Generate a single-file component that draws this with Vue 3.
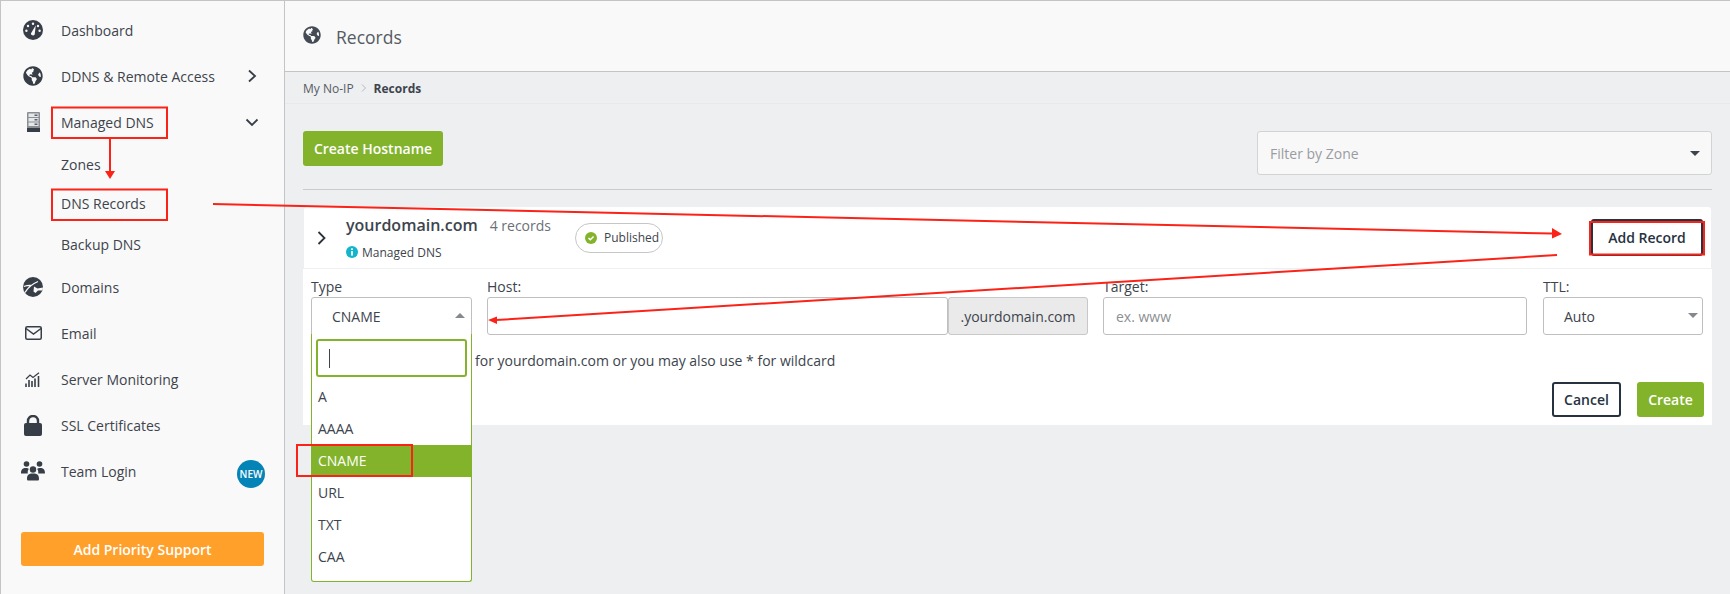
<script setup>
const globe = 'M248 8C111.03 8 0 119.03 0 256s111.03 248 248 248 248-111.03 248-248S384.97 8 248 8zm82.29 357.6c-3.9 3.88-7.99 7.95-11.31 11.28-2.99 3-5.1 6.7-6.17 10.71-1.51 5.66-2.73 11.38-4.77 16.87l-17.39 46.85c-13.76 3-28 4.69-42.65 4.69v-27.38c1.69-12.62-7.64-36.26-22.63-51.25-6-6-9.37-14.14-9.37-22.63v-32.01c0-11.64-6.27-22.34-16.46-27.97-14.37-7.95-34.81-19.06-48.81-26.11-11.48-5.78-22.1-13.14-31.65-21.75l-.8-.72a114.792 114.792 0 0 1-18.06-20.74c-9.38-13.77-24.66-36.42-34.59-51.14 20.47-45.5 57.36-82.04 103.2-101.89l24.01 12.01C203.48 89.74 216 82.01 216 70.11v-11.3c7.99-1.29 16.12-2.11 24.45-2.41l28.3 28.3c6.25 6.25 6.25 16.38 0 22.63L264 112l-10.34 10.34c-3.12 3.12-3.12 8.19 0 11.31l4.69 4.69c3.12 3.12 3.12 8.19 0 11.31l-8 8a8.008 8.008 0 0 1-5.66 2.34h-8.99c-2.08 0-4.08.81-5.58 2.27l-9.92 9.65a8.008 8.008 0 0 0-1.58 9.31l15.59 31.19c2.66 5.32-1.21 11.58-7.15 11.58h-5.64c-1.93 0-3.79-.7-5.24-1.96l-9.28-8.06a16.017 16.017 0 0 0-15.55-3.1l-31.17 10.39a11.95 11.95 0 0 0-8.17 11.34c0 4.53 2.56 8.66 6.61 10.69l11.08 5.54c9.41 4.71 19.79 7.16 30.31 7.16s22.59 27.29 32 32h66.75c8.49 0 16.62 3.37 22.63 9.37l13.69 13.69a30.503 30.503 0 0 1 8.93 21.57 46.536 46.536 0 0 1-13.72 32.98zM417 274.25c-5.79-1.45-10.84-5-14.15-9.97l-17.98-26.97a23.97 23.97 0 0 1 0-26.62l19.59-29.38c2.32-3.47 5.5-6.29 9.24-8.15l12.98-6.49C440.2 193.59 448 223.87 448 256c0 8.67-.74 17.16-1.82 25.54L417 274.25z'
const navTop = [
  { label: 'Dashboard', icon: 'dash' },
  { label: 'DDNS & Remote Access', icon: 'globe', chev: 'right' },
  { label: 'Managed DNS', icon: 'server', chev: 'down' }
]
const subs = ['Zones', 'DNS Records', 'Backup DNS']
const navBottom = [
  { label: 'Domains', icon: 'domains' },
  { label: 'Email', icon: 'mail' },
  { label: 'Server Monitoring', icon: 'chart' },
  { label: 'SSL Certificates', icon: 'lock' },
  { label: 'Team Login', icon: 'team', badge: true }
]
const options = ['A', 'AAAA', 'CNAME', 'URL', 'TXT', 'CAA']
</script>

<template>
  <div class="page">
    <aside class="side">
      <div v-for="n in navTop" :key="n.label" class="nav">
        <span class="ico">
          <svg v-if="n.icon === 'dash'" width="20" height="20" viewBox="0 0 20 20"><circle cx="10" cy="10" r="10" fill="#373e47"/><circle cx="10" cy="3.800" r="1.200" fill="#f9f9f9"/><circle cx="5" cy="6" r="1.200" fill="#f9f9f9"/><circle cx="3.400" cy="10.800" r="1.200" fill="#f9f9f9"/><circle cx="16.600" cy="10.800" r="1.200" fill="#f9f9f9"/><circle cx="15" cy="6" r="1.200" fill="#f9f9f9"/><path d="M7.900 13.400 12.800 5.200 11.700 14.600A2.100 2.100 0 0 1 7.900 13.400Z" fill="#f9f9f9"/></svg>
          <svg v-else-if="n.icon === 'globe'" width="20" height="20" viewBox="0 0 496 512"><path :d="globe" fill="#373e47"/></svg>
          <svg v-else width="13" height="20" viewBox="0 0 13 20"><rect width="13" height="20" rx="1" fill="#8b8f94"/><rect x="1.500" y="1.500" width="10" height="3.500" fill="#e6e7e8"/><rect x="1.500" y="6" width="10" height="3.500" fill="#e6e7e8"/><rect x="1.500" y="10.500" width="10" height="3.500" fill="#e6e7e8"/><rect x="7.500" y="2.500" width="3" height="1.500" fill="#5b6168"/><rect x="7.500" y="7" width="3" height="1.500" fill="#5b6168"/><rect x="7.500" y="11.500" width="3" height="1.500" fill="#5b6168"/><rect y="16" width="13" height="4" fill="#373e47"/></svg>
        </span>
        <span>{{ n.label }}</span>
        <svg v-if="n.chev === 'right'" class="chev" width="14" height="14" viewBox="0 0 14 14"><path d="M4 1.500 10 7 4 12.500" fill="none" stroke="#373e47" stroke-width="1.800"/></svg>
        <svg v-if="n.chev === 'down'" class="chev" width="14" height="14" viewBox="0 0 14 14"><path d="M1.500 4.500 7 10 12.500 4.500" fill="none" stroke="#373e47" stroke-width="1.800"/></svg>
      </div>
      <div class="subs">
        <div v-for="s in subs" :key="s" class="sub" :class="{ active: s === 'DNS Records' }"><span>{{ s }}</span></div>
      </div>
      <div v-for="n in navBottom" :key="n.label" class="nav">
        <span class="ico">
          <svg v-if="n.icon === 'domains'" width="20" height="20" viewBox="0 0 20 20"><circle cx="10" cy="10" r="10" fill="#373e47"/><path d="M2 15.500C5 10.500 9 7 15 4.500M.8 9.500C3.500 8.500 6 8 8.500 8.500" fill="none" stroke="#f9f9f9" stroke-width="1.300"/><path d="M11 9.500 14.500 11.500 20 10.500 19.500 13.500 15 13.500 12.500 16 10.500 14.500Z" fill="#f9f9f9"/></svg>
          <svg v-else-if="n.icon === 'mail'" width="17" height="14" viewBox="0 0 17 14"><rect x=".75" y=".75" width="15.500" height="12.500" rx="1.500" fill="none" stroke="#373e47" stroke-width="1.500"/><path d="M1 2.500 8.500 8 16 2.500" fill="none" stroke="#373e47" stroke-width="1.500"/></svg>
          <svg v-else-if="n.icon === 'chart'" width="16" height="15" viewBox="0 0 16 15"><path d="M1 7 5 3 8 5.500 14 .8" fill="none" stroke="#373e47" stroke-width="1.200"/><path d="M1 11.500V15M4 8V15M7 9V15M10 6.500V15M13.500 4V15" stroke="#373e47" stroke-width="1.600"/></svg>
          <svg v-else-if="n.icon === 'lock'" width="18" height="21" viewBox="0 0 18 21"><path d="M4 9V6a5 5 0 0 1 10 0v3" fill="none" stroke="#373e47" stroke-width="2.400"/><rect y="8" width="18" height="13" rx="2" fill="#373e47"/></svg>
          <svg v-else width="24" height="20" viewBox="0 0 24 20"><circle cx="5.500" cy="3" r="2.800" fill="#373e47"/><circle cx="18.500" cy="3" r="2.800" fill="#373e47"/><circle cx="12" cy="8.500" r="3.200" fill="#373e47"/><path d="M0 12.500c0-4 1.500-5.500 5-5.500 1.200 0 2.200.3 2.800 1-1 1-1.300 2.800-1 4.500ZM24 12.500c0-4-1.500-5.500-5-5.500-1.200 0-2.200.3-2.800 1 1 1 1.300 2.800 1 4.500ZM6 18c0-4 1.500-5.500 6-5.500s6 1.500 6 5.500c0 1-.5 1.500-1.500 1.500h-9C6.500 19.500 6 19 6 18Z" fill="#373e47"/></svg>
        </span>
        <span>{{ n.label }}</span>
        <span v-if="n.badge" class="badge">NEW</span>
      </div>
      <button class="priority">Add Priority Support</button>
    </aside>

    <main class="main">
      <header class="head">
        <svg width="18" height="18" viewBox="0 0 496 512"><path :d="globe" fill="#454b54"/></svg>
        <h1>Records</h1>
      </header>
      <nav class="crumbs">
        <span>My No-IP</span>
        <svg width="6" height="8" viewBox="0 0 6 8"><path d="M1 .5 4.500 4 1 7.500" fill="none" stroke="#b5b8bc"/></svg>
        <b>Records</b>
      </nav>
      <section class="content">
        <div class="toolbar">
          <button class="btn green wide">Create Hostname</button>
          <div class="filter"><span>Filter by Zone</span><i class="caret"></i></div>
        </div>
        <hr class="rule" />
        <div class="card">
          <svg class="card-chev" width="10" height="14" viewBox="0 0 10 14"><path d="M1.500 1 7.500 7 1.500 13" fill="none" stroke="#2b323b" stroke-width="1.800"/></svg>
          <div class="card-name">
            <div class="name-line"><strong>yourdomain.com</strong><span>4 records</span></div>
            <div class="managed">
              <svg width="12" height="12" viewBox="0 0 12 12"><circle cx="6" cy="6" r="6" fill="#13b5cc"/><rect x="5.100" y="2.300" width="1.800" height="1.700" fill="#fff"/><rect x="5.100" y="5" width="1.800" height="4.600" fill="#fff"/></svg>
              Managed DNS
            </div>
          </div>
          <div class="pill">
            <svg width="12" height="12" viewBox="0 0 12 12"><circle cx="6" cy="6" r="6" fill="#82b32b"/><path d="M3.500 6 5.300 7.800 8.600 4.400" fill="none" stroke="#fff" stroke-width="1.500"/></svg>
            Published
          </div>
          <button class="btn outline add">Add Record</button>
        </div>
        <div class="panel">
          <div class="fields">
            <div class="field type">
              <label>Type</label>
              <div class="select open"><span>CNAME</span><i class="tri up"></i></div>
              <div class="drop">
                <div class="search"><i class="cursor"></i></div>
                <div v-for="o in options" :key="o" class="opt" :class="{ sel: o === 'CNAME' }">{{ o }}</div>
              </div>
            </div>
            <div class="field host">
              <label>Host:</label>
              <div class="group"><div class="ginput"></div><div class="addon">.yourdomain.com</div></div>
            </div>
            <div class="field target">
              <label>Target:</label>
              <input class="input" placeholder="ex. www" />
            </div>
            <div class="field ttl">
              <label>TTL:</label>
              <div class="select"><span>Auto</span><i class="tri"></i></div>
            </div>
          </div>
          <p class="hint">for yourdomain.com or you may also use * for wildcard</p>
          <div class="actions">
            <button class="btn outline cancel">Cancel</button>
            <button class="btn green create">Create</button>
          </div>
        </div>
      </section>
    </main>

    <svg class="notes" width="1730" height="594" viewBox="0 0 1730 594">
      <g fill="none" stroke="#fb2317" stroke-width="2">
        <rect x="52" y="107.500" width="115" height="30.500"/>
        <rect x="52" y="189.500" width="115" height="30.500"/>
        <rect x="297" y="445" width="115" height="31"/>
        <rect x="1590" y="222" width="114" height="32.500"/>
        <path d="M110 138V171"/>
        <path d="M213 204 1552 233.500"/>
        <path d="M1557 255 496 320"/>
      </g>
      <g fill="#fb2317">
        <path d="M105 171H115L110 179Z"/>
        <path d="M1552 228 1562 234 1552 238.500Z"/>
        <path d="M488 320 497 316.500 497 324Z"/>
      </g>
    </svg>
  </div>
</template>

<style>
html, body { margin: 0; background: #eeeff1; }
</style>

<style scoped>
.page {
  position: relative;
  display: flex;
  width: 1730px;
  height: 594px;
  overflow: hidden;
  font-family: "Open Sans", "Liberation Sans", sans-serif;
  font-size: 14px;
  color: #3d444d;
  background: #eeeff1;
  box-sizing: border-box;
}
.side {
  width: 285px;
  flex: none;
  box-sizing: border-box;
  background: #f9f9f9;
  border-left: 1px solid #c4c4c4;
  border-top: 1px solid #c4c4c4;
  border-right: 1px solid #c4c4c4;
  padding-top: 6px;
}
.nav {
  position: relative;
  display: flex;
  align-items: center;
  height: 46px;
  padding-left: 60px;
}
.ico {
  position: absolute;
  left: 12px;
  width: 40px;
  display: flex;
  justify-content: center;
  align-items: center;
}
.chev { position: absolute; left: 244px; }
.subs { display: flex; flex-direction: column; margin-bottom: -1px; }
.sub { height: 40px; padding-left: 60px; display: flex; align-items: center; }
.sub span { line-height: 30px; height: 30px; }
.sub.active span { border-bottom: 2px solid #0a80b2; }
.badge {
  position: absolute;
  left: 236px;
  top: 12px;
  width: 28px;
  height: 28px;
  border-radius: 50%;
  background: #0483b6;
  color: #fff;
  font-size: 10px;
  font-weight: 600;
  display: flex;
  align-items: center;
  justify-content: center;
}
.priority {
  display: block;
  margin: 38px 0 0 20px;
  width: 243px;
  height: 34px;
  border: 0;
  border-radius: 3px;
  background: #ffa02b;
  color: #fff;
  font: 600 14px "Open Sans", sans-serif;
}
.main { flex: 1; min-width: 0; display: flex; flex-direction: column; }
.head {
  height: 70px;
  display: flex;
  align-items: center;
  gap: 15px;
  padding-left: 18px;
  background: #f9f9f9;
  border-top: 1px solid #c4c4c4;
  border-bottom: 1px solid #c4c4c4;
}
.head svg { margin-top: -2px; }
.head h1 { margin: 1px 0 0; font-size: 17.500px; font-weight: 400; color: #555b63; }
.crumbs {
  height: 31px;
  display: flex;
  align-items: center;
  gap: 7px;
  padding: 1px 0 0 18px;
  box-sizing: content-box;
  font-size: 12px;
  color: #555b63;
  border-bottom: 1px solid #e8e9eb;
  height: 30px;
}
.crumbs b { color: #3d444d; font-weight: 700; }
.content { padding: 26px 18px 0; }
.toolbar { display: flex; justify-content: space-between; align-items: flex-start; padding-top: 1px; }
.btn {
  font: 600 14px "Open Sans", sans-serif;
  border-radius: 3px;
  box-sizing: border-box;
  padding: 0;
}
.green { background: #82b32b; color: #fff; border: 0; }
.wide { width: 140px; height: 35px; }
.filter {
  width: 455px;
  height: 44px;
  box-sizing: border-box;
  background: #f8f8f8;
  border: 1px solid #d2d3d5;
  border-radius: 3px;
  display: flex;
  align-items: center;
  justify-content: space-between;
  padding: 0 11px 0 12px;
  color: #9a9ca0;
}
.caret { border: 5px solid transparent; border-top-color: #3d444d; border-bottom: 0; width: 0; height: 0; }
.rule { border: 0; border-top: 1px solid #c9cacc; margin: 14px 0 17px; }
.card {
  position: relative;
  margin: 0 1px;
  height: 61px;
  background: #fff;
  border-radius: 3px 3px 0 0;
  display: flex;
  align-items: center;
}
.card-chev { margin-left: 13px; }
.card-name { margin-left: 19px; width: 229px; padding-top: 2px; }
.name-line { display: flex; align-items: baseline; gap: 12px; height: 26px; }
.name-line strong { font-size: 16px; font-weight: 600; color: #3d444d; }
.name-line span { font-size: 14px; color: #6b7078; }
.managed { display: flex; align-items: center; gap: 4px; font-size: 12px; height: 22px; margin-top: 1px; }
.pill {
  height: 30px;
  width: 88px;
  box-sizing: border-box;
  border: 1px solid #c6c6c6;
  border-radius: 15px;
  display: flex;
  align-items: center;
  gap: 7px;
  padding-left: 9px;
  font-size: 12px;
}
.outline { background: #fff; border: 2px solid #263240; color: #263240; }
.add { position: absolute; right: 8px; top: 12px; width: 112px; height: 37px; }
.panel {
  margin-top: 1px;
  height: 156px;
  background: #fff;
  padding: 7px 8px 0;
  box-sizing: border-box;
  display: flex;
  flex-direction: column;
}
.fields { display: flex; }
.field { position: relative; flex: none; }
.field label { display: block; height: 21px; line-height: 21px; font-size: 14px; }
.type { width: 161px; margin-right: 15px; }
.host { width: 601px; margin-right: 15px; }
.target { width: 424px; margin-right: 16px; }
.ttl { width: 160px; }
.select, .input, .group {
  box-sizing: border-box;
  height: 38px;
  width: 100%;
}
.select {
  position: relative;
  border: 1px solid #bfbfbf;
  border-radius: 3px;
  display: flex;
  align-items: center;
  padding-left: 20px;
  background: #fff;
}
.select.open { border-radius: 3px 3px 0 0; }
.tri { position: absolute; right: 4px; border: 5px solid transparent; border-top-color: #85888c; border-bottom: 0; width: 0; height: 0; margin-top: -2px; }
.tri.up { border-top: 0; border-bottom: 5px solid #85888c; right: 6px; }
.input {
  display: block;
  border: 1px solid #bfbfbf;
  border-radius: 3px;
  padding: 0 12px;
  font: 400 14px "Open Sans", sans-serif;
  outline: 0;
}
.input::placeholder { color: #8c8f93; }
.group { display: flex; }
.ginput { width: 461px; box-sizing: border-box; border: 1px solid #bfbfbf; border-radius: 3px; }
.addon {
  width: 140px;
  box-sizing: border-box;
  background: #eaeaea;
  border: 1px solid #c8c8c8;
  border-radius: 3px;
  display: flex;
  align-items: center;
  justify-content: center;
}
.drop {
  position: absolute;
  z-index: 2;
  left: 0;
  top: 58px;
  width: 161px;
  height: 248px;
  box-sizing: border-box;
  background: #fff;
  border: 1px solid #82b32b;
  border-top: 0;
  border-radius: 0 0 3px 3px;
}
.search {
  position: relative;
  box-sizing: border-box;
  margin: 5px 4px 4px;
  height: 38px;
  border: 2px solid #82b32b;
  border-radius: 3px;
}
.cursor { position: absolute; left: 11px; top: 8px; width: 1px; height: 19px; background: #3d444d; }
.opt { height: 32px; line-height: 32px; padding-left: 6px; }
.opt.sel { background: #82b32b; color: #fff; }
.hint { margin: 16px 0 0 164px; line-height: 20px; }
.actions { display: flex; justify-content: flex-end; gap: 16px; margin-top: 11px; }
.cancel { width: 69px; height: 35px; }
.create { width: 67px; height: 35px; }
.notes { position: absolute; left: 0; top: 0; pointer-events: none; z-index: 5; }
</style>
